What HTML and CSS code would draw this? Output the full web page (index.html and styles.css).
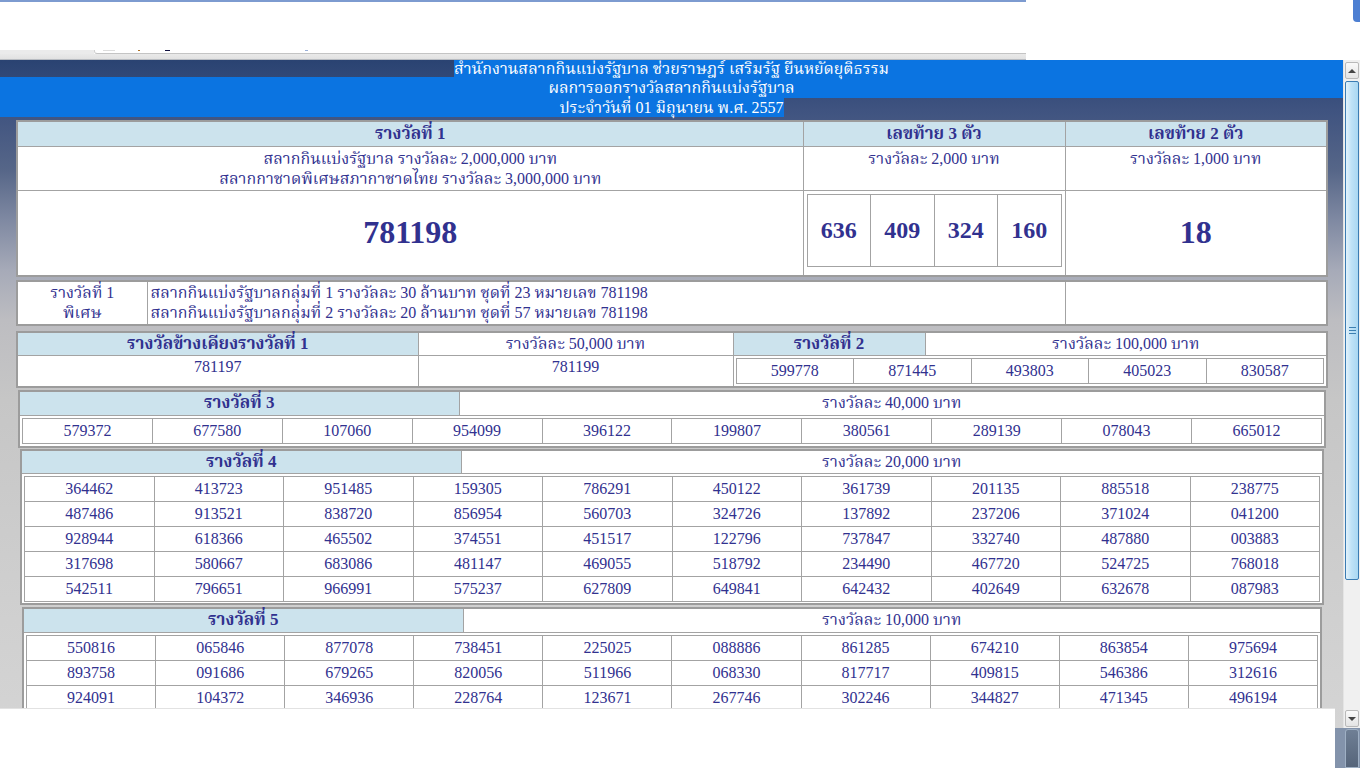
FILE: index.html
```html
<!DOCTYPE html>
<html lang="th">
<head>
<meta charset="utf-8">
<title>ผลการออกรางวัลสลากกินแบ่งรัฐบาล</title>
<link rel="stylesheet" href="styles.css">
</head>
<body>
<div class="chrome">
  <div class="chrome-left">
    <div class="edge"></div>
    <div class="blank"></div>
    <div class="strip">
      <div class="strip-gray"></div>
      <div class="strip-box"><span class="mk m1"></span><span class="mk m2"></span><span class="mk m3"></span><span class="mk m4"></span></div>
    </div>
    <div class="band"></div>
  </div>
  <div class="chrome-right"><div class="corner"></div></div>
</div>

<div class="window">
  <div class="viewport">
    <div class="masthead">
      <div class="hline l1"><span class="fill"></span><span class="htxt sel">สำนักงานสลากกินแบ่งรัฐบาล ช่วยราษฎร์ เสริมรัฐ ยืนหยัดยุติธรรม</span><span class="fill sel"></span></div>
      <div class="hline l2 sel"><span class="htxt">ผลการออกรางวัลสลากกินแบ่งรัฐบาล</span></div>
      <div class="hline l3"><span class="fill sel"></span><span class="htxt sel">ประจำวันที่ 01 มิถุนายน พ.ศ. 2557</span><span class="fill"></span></div>
    </div>

    <table class="t t-top">
      <colgroup><col class="w60"><col class="w20"><col class="w20"></colgroup>
      <tr class="hd"><th>รางวัลที่ 1</th><th>เลขท้าย 3 ตัว</th><th>เลขท้าย 2 ตัว</th></tr>
      <tr class="desc"><td>สลากกินแบ่งรัฐบาล รางวัลละ 2,000,000 บาท<br>สลากกาชาดพิเศษสภากาชาดไทย รางวัลละ 3,000,000 บาท</td><td>รางวัลละ 2,000 บาท</td><td>รางวัลละ 1,000 บาท</td></tr>
      <tr class="big"><td class="first">781198</td>
        <td class="three-cell">
          <table class="inner three"><tr><td>636</td><td>409</td><td>324</td><td>160</td></tr></table>
        </td>
        <td class="two">18</td></tr>
    </table>

    <table class="t t-special">
      <colgroup><col class="wsp1"><col class="wsp2"><col class="w20"></colgroup>
      <tr><td class="sp-label">รางวัลที่ 1<br>พิเศษ</td><td class="sp-text">สลากกินแบ่งรัฐบาลกลุ่มที่ 1 รางวัลละ 30 ล้านบาท ชุดที่ 23 หมายเลข 781198<br>สลากกินแบ่งรัฐบาลกลุ่มที่ 2 รางวัลละ 20 ล้านบาท ชุดที่ 57 หมายเลข 781198</td><td></td></tr>
    </table>

    <table class="t t-near">
      <colgroup><col class="wn1"><col class="wn2"><col class="wn3"><col class="wn4"></colgroup>
      <tr class="hd2"><th>รางวัลข้างเคียงรางวัลที่ 1</th><td>รางวัลละ 50,000 บาท</td><th>รางวัลที่ 2</th><td>รางวัลละ 100,000 บาท</td></tr>
      <tr class="near-row"><td class="top">781197</td><td class="top">781199</td>
        <td colspan="2" class="holder">
          <table class="inner nums"><tr><td>599778</td><td>871445</td><td>493803</td><td>405023</td><td>830587</td></tr></table>
        </td></tr>
    </table>

    <table class="t t-group g3">
      <colgroup><col class="wg1"><col class="wg2"></colgroup>
      <tr class="hd2"><th>รางวัลที่ 3</th><td>รางวัลละ 40,000 บาท</td></tr>
      <tr><td colspan="2" class="holder">
        <table class="inner nums">
          <tr><td>579372</td><td>677580</td><td>107060</td><td>954099</td><td>396122</td><td>199807</td><td>380561</td><td>289139</td><td>078043</td><td>665012</td></tr>
        </table>
      </td></tr>
    </table>

    <table class="t t-group g4">
      <colgroup><col class="wg1"><col class="wg2"></colgroup>
      <tr class="hd2"><th>รางวัลที่ 4</th><td>รางวัลละ 20,000 บาท</td></tr>
      <tr><td colspan="2" class="holder tight">
        <table class="inner nums">
          <tr><td>364462</td><td>413723</td><td>951485</td><td>159305</td><td>786291</td><td>450122</td><td>361739</td><td>201135</td><td>885518</td><td>238775</td></tr>
          <tr><td>487486</td><td>913521</td><td>838720</td><td>856954</td><td>560703</td><td>324726</td><td>137892</td><td>237206</td><td>371024</td><td>041200</td></tr>
          <tr><td>928944</td><td>618366</td><td>465502</td><td>374551</td><td>451517</td><td>122796</td><td>737847</td><td>332740</td><td>487880</td><td>003883</td></tr>
          <tr><td>317698</td><td>580667</td><td>683086</td><td>481147</td><td>469055</td><td>518792</td><td>234490</td><td>467720</td><td>524725</td><td>768018</td></tr>
          <tr><td>542511</td><td>796651</td><td>966991</td><td>575237</td><td>627809</td><td>649841</td><td>642432</td><td>402649</td><td>632678</td><td>087983</td></tr>
        </table>
      </td></tr>
    </table>

    <table class="t t-group g5">
      <colgroup><col class="wg1"><col class="wg2"></colgroup>
      <tr class="hd2"><th>รางวัลที่ 5</th><td>รางวัลละ 10,000 บาท</td></tr>
      <tr><td colspan="2" class="holder">
        <table class="inner nums">
          <tr><td>550816</td><td>065846</td><td>877078</td><td>738451</td><td>225025</td><td>088886</td><td>861285</td><td>674210</td><td>863854</td><td>975694</td></tr>
          <tr><td>893758</td><td>091686</td><td>679265</td><td>820056</td><td>511966</td><td>068330</td><td>817717</td><td>409815</td><td>546386</td><td>312616</td></tr>
          <tr><td>924091</td><td>104372</td><td>346936</td><td>228764</td><td>123671</td><td>267746</td><td>302246</td><td>344827</td><td>471345</td><td>496194</td></tr>
        </table>
      </td></tr>
    </table>
  </div>

  <div class="scrollbar">
    <div class="sb-btn up"><span class="tri-up"></span></div>
    <div class="sb-track">
      <div class="sb-thumb"><span class="grip"></span></div>
    </div>
    <div class="sb-btn down"><span class="tri-down"></span></div>
  </div>
</div>

<div class="bottom">
  <div class="bottom-left"></div>
  <div class="bottom-right"><div class="bottom-knob"></div></div>
</div>

<div class="cover"></div>
</body>
</html>
```

FILE: styles.css
```css
* { box-sizing: border-box; }
html, body { margin: 0; padding: 0; }
body {
  width: 1360px;
  height: 768px;
  overflow: hidden;
  background: #ffffff;
  font-family: "Liberation Serif", "Norasi", "Noto Serif Thai", "Noto Sans Thai", "Garuda", serif;
  color: #31318f;
  position: relative;
}

/* top chrome */
.chrome { display: flex; height: 60px; }
.chrome-left { width: 1026px; display: flex; flex-direction: column; }
.edge { height: 2px; background: #7d9bd0; }
.blank { height: 48px; background: #fff; }
.strip { display: flex; height: 4px; }
.strip-gray { width: 94px; background: #ebebeb; }
.strip-box {
  flex: 1; background: #fff; border-left: 1px solid #d0d0d0; border-bottom: 1px solid #c4c4c4;
  border-bottom-left-radius: 3px; position: relative;
}
.mk { position: absolute; top: 0; height: 1px; }
.m1 { left: 8px; width: 12px; background: #dcdcdc; }
.m2 { left: 43px; width: 2px; background: #b07020; }
.m3 { left: 70px; width: 5px; background: #101040; }
.m4 { left: 210px; width: 3px; background: #9ab0d8; }
.band { flex: 1; background: linear-gradient(#e9e9e9, #e2e2e2 80%, #9aa0aa); }
.chrome-right { flex: 1; background: #fff; position: relative; }
.corner {
  position: absolute; right: 0; top: 0; width: 7px; height: 22px;
  background: #4d7fd2; border-bottom-left-radius: 4px;
}

/* main window */
.window { display: flex; height: 668px; }
.viewport {
  width: 1343px;
  overflow: hidden;
  background: linear-gradient(to bottom, #2a4372 0, #3f5380 50px, #566688 110px, #7f89a2 160px, #a6aab8 210px, #bdbdc1 260px, #c6c6c6 340px, #d0d0d0 560px, #d4d4d4 668px);
}

/* masthead with selection look */
.masthead { color: #fff; font-size: 16px; margin-bottom: 3px; }
.hline { display: flex; }
.hline.l1 { height: 17px; line-height: 17px; }
.hline.l2 { height: 21px; line-height: 21px; justify-content: center; }
.hline.l3 { height: 19px; line-height: 19px; }
.fill { flex: 1; }
.sel { background: #0b74e1; }
.htxt { white-space: nowrap; }

/* tables */
.t {
  border-collapse: collapse;
  table-layout: fixed;
  border: 2px solid #9c9c9c;
  background: #fff;
  font-size: 16px;
}
.t td, .t th { border: 1px solid #a3a3a3; padding: 0; text-align: center; }
.t th { background: #cce3ed; font-weight: bold; font-size: 17px; }

.t-top { width: 1312px; margin: 0 0 0 16px; }
.w60 { width: 786px; }
.w20 { width: 262px; }
.t-top .hd th { height: 25px; line-height: 22px; }
.t-top .desc td { height: 44px; vertical-align: top; line-height: 20px; padding-top: 2px; }
.t-top .big td { height: 83px; }
.t-top .first, .t-top .two { font-size: 32px; font-weight: bold; }
.three-cell { padding: 3px 3px 8px 3px !important; vertical-align: top; }
.inner { border-collapse: collapse; width: 100%; table-layout: fixed; border: 1px solid #9c9c9c; }
.inner.three td { height: 72px; font-size: 24px; font-weight: bold; border: 1px solid #a3a3a3; }

.t-special { width: 1312px; margin: 3px 0 0 16px; }
.wsp1 { width: 130px; }
.wsp2 { width: 918px; }
.t-special td { height: 44px; line-height: 20px; vertical-align: middle; }
.t-special .sp-text { text-align: left; padding-left: 3px; }

.t-near { width: 1312px; margin: 5px 0 0 16px; }
.wn1 { width: 401px; }
.wn2 { width: 315px; }
.wn3 { width: 192px; }
.wn4 { width: 402px; }
.hd2 th, .hd2 td { height: 24px; line-height: 22px; }
.near-row td.top { vertical-align: top; height: 30px; line-height: 22px; }
.holder { padding: 2px !important; }
.holder.tight { padding: 2px 2px 1px 2px !important; }
.inner.nums td { height: 25px; line-height: 22px; border: 1px solid #a3a3a3; }

.g3 { width: 1308px; margin: 2px 0 0 18px; }
.g4 { width: 1304px; margin: 1px 0 0 20px; }
.g5 { width: 1300px; margin: 2px 0 0 22px; }
.wg1 { width: 440px; }
.wg2 { width: auto; }

/* scrollbar */
.scrollbar {
  width: 17px;
  display: flex; flex-direction: column;
  background: #f0f0f0;
  border-left: 1px solid #e4e4e4;
  padding-top: 2px;
}
.sb-btn {
  height: 17px; margin: 0 1px; border: 1px solid #b9b9b9; border-radius: 2px;
  background: linear-gradient(#fafafa, #e4e4e4);
  display: flex; align-items: center; justify-content: center;
}
.tri-up { width: 0; height: 0; border-left: 4px solid transparent; border-right: 4px solid transparent; border-bottom: 4px solid #444; }
.tri-down { width: 0; height: 0; border-left: 4px solid transparent; border-right: 4px solid transparent; border-top: 4px solid #444; }
.sb-track { flex: 1; padding: 2px 1px 0 1px; }
.sb-thumb {
  height: 499px;
  border: 1px solid #3b7cb3; border-radius: 2px;
  background: linear-gradient(to right, #e3f3fc, #bfe2f7 45%, #a9d7f2);
  display: flex; align-items: center; justify-content: center;
}
.grip {
  width: 7px; height: 7px;
  background: repeating-linear-gradient(#3c7fb1 0 1px, transparent 1px 3px);
}
.scrollbar .down { margin-bottom: 1px; }

/* bottom */
.bottom { display: flex; height: 40px; }
.bottom-left { width: 1335px; background: #fff; }
.bottom-right { flex: 1; background: #8393ab; padding: 1px 1px 0 10px; }
.bottom-knob { height: 100%; border: 1px solid #9fb0c4; border-radius: 3px 3px 0 0; background: linear-gradient(#6f7f95, #56657a); }

.cover {
  position: absolute; left: 0; top: 708px; width: 1335px; height: 60px;
  background: #fff; border-top: 1px solid #e2e2e2;
}
```
